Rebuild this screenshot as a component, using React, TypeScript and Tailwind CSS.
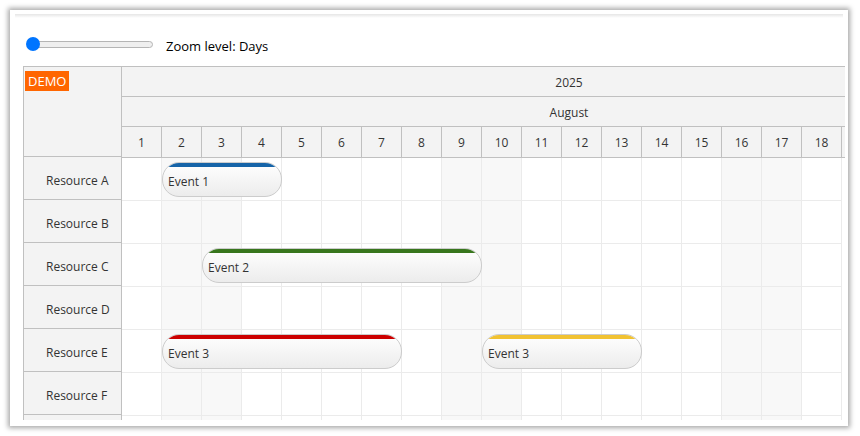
import React from "react";

const DAYS = Array.from({length: 18}, (_, i) => i + 1);
const WEEKENDS = [2, 3, 9, 10, 16, 17];
const RESOURCES = ["Resource A", "Resource B", "Resource C", "Resource D", "Resource E", "Resource F", ""];

const DAY_W = 40;
const ROW_H = 43;

type EventItem = {text: string; row: number; start: number; end: number; color: string};

const EVENTS: EventItem[] = [
    {text: "Event 1", row: 0, start: 2, end: 4, color: "#1664a8"},
    {text: "Event 2", row: 2, start: 3, end: 9, color: "#38761d"},
    {text: "Event 3", row: 4, start: 2, end: 7, color: "#cc0000"},
    {text: "Event 3", row: 4, start: 10, end: 13, color: "#f1c232"},
];

const font = {fontFamily: '"Open Sans", "Noto Sans", sans-serif'};

export default function App() {
    return (
        <div className="h-[436px] w-[860px] bg-white pt-[10px] pl-[10px]" style={font}>
            <div className="relative h-[416px] w-[838px] overflow-hidden bg-white shadow-[0_0_5px_2px_rgba(0,0,0,0.35)]">
                <div className="mx-[5px] mt-[4px] h-[4px] bg-gradient-to-b from-[#e6e6e6] to-white" />

                {/* zoom slider */}
                <div className="mt-[19px] flex h-[14px] items-center pl-[16px]">
                    <div className="relative h-[14px] w-[128px]">
                        <div className="absolute top-[4px] left-[2px] h-[7px] w-[125px] rounded-full border border-[#b5b5b5] bg-[#efefef]" />
                        <div className="absolute top-0 left-0 h-[14px] w-[14px] rounded-full bg-[#0075ff]" />
                    </div>
                    <span className="ml-[12px] pt-[6px] text-[13px] text-black">Zoom level: Days</span>
                </div>

                {/* scheduler */}
                <div className="mt-[15px] ml-[13px] flex h-[354px] w-[822px] overflow-hidden border-t border-l border-[#c0c0c0]">
                    {/* row headers */}
                    <div className="flex w-[98px] shrink-0 flex-col border-r border-[#c0c0c0] bg-[#f3f3f3]">
                        <div className="h-[90px] shrink-0 border-b border-[#c0c0c0] pt-[1px] pl-[1px]">
                            <span className="inline-block bg-[#ff6600] px-[3px] text-[13px] leading-[20px] text-white">DEMO</span>
                        </div>
                        {RESOURCES.map((r, i) => (
                            <div
                                key={i}
                                className="flex h-[43px] shrink-0 items-center border-b border-[#c0c0c0] pt-[6px] pl-[22px] text-[12px] text-[#333]"
                            >
                                {r}
                            </div>
                        ))}
                    </div>

                    {/* timeline */}
                    <div className="relative flex flex-col">
                        <div className="flex h-[30px] w-[894px] shrink-0 items-center justify-center border-b border-[#c0c0c0] bg-[#f3f3f3] pt-[2px] text-[12px] text-[#333]">
                            2025
                        </div>
                        <div className="flex h-[30px] w-[894px] shrink-0 items-center justify-center border-b border-[#c0c0c0] bg-[#f3f3f3] pt-[2px] text-[12px] text-[#333]">
                            August
                        </div>
                        <div className="flex h-[31px] shrink-0 border-b border-[#c0c0c0] bg-[#f3f3f3]">
                            {DAYS.map((d) => (
                                <div
                                    key={d}
                                    className="flex h-full w-[40px] shrink-0 items-center justify-center border-r border-[#c0c0c0] pt-[2px] text-[12px] text-[#333]"
                                >
                                    {d}
                                </div>
                            ))}
                        </div>
                        <div className="relative">
                            {RESOURCES.map((r, i) => (
                                <div key={i} className="flex h-[43px] shrink-0">
                                    {DAYS.map((d) => (
                                        <div
                                            key={d}
                                            className={`h-full w-[40px] shrink-0 border-r border-b border-[#ebebeb] ${
                                                WEEKENDS.includes(d) ? "bg-[#f8f8f8]" : "bg-white"
                                            }`}
                                        />
                                    ))}
                                </div>
                            ))}

                            {EVENTS.map((e, i) => (
                                <div
                                    key={i}
                                    className="absolute flex h-[35px] items-center overflow-hidden rounded-[17px] border border-[#cccccc] bg-gradient-to-b from-white to-[#ececec] pt-[4px] pl-[5px] text-[12px] text-[#333]"
                                    style={{
                                        left: (e.start - 1) * DAY_W,
                                        width: (e.end - e.start + 1) * DAY_W,
                                        top: e.row * ROW_H + 4,
                                    }}
                                >
                                    <div className="absolute top-0 right-0 left-0 h-[4px]" style={{backgroundColor: e.color}} />
                                    {e.text}
                                </div>
                            ))}
                        </div>
                    </div>
                </div>
            </div>
        </div>
    );
}
